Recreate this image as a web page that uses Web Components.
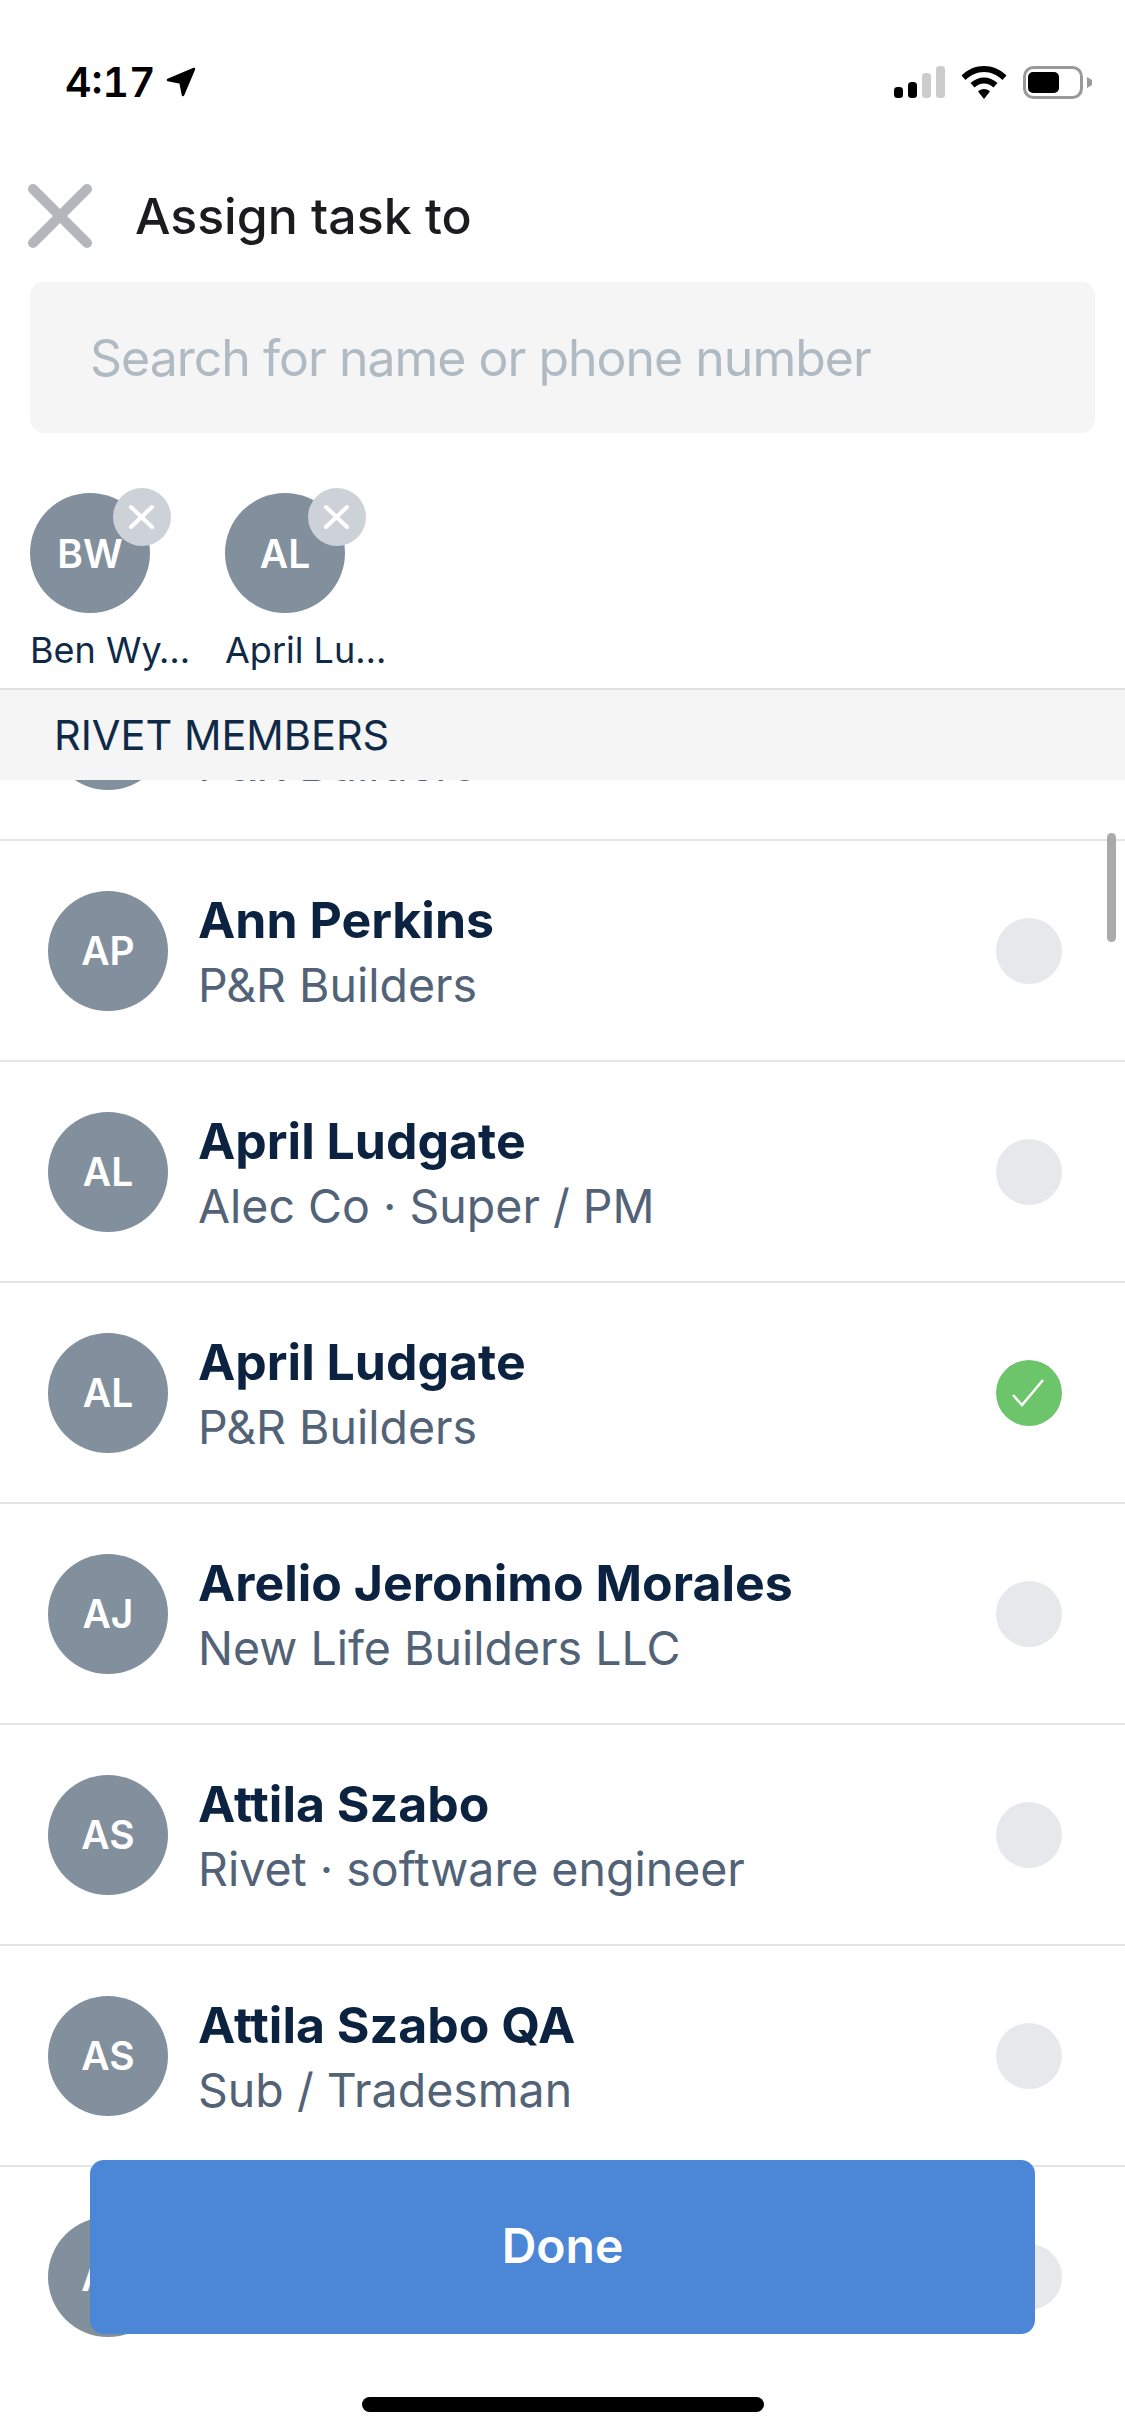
<!doctype html>
<html>
<head>
<meta charset="utf-8">
<title>Assign task to</title>
<style>
  html, body { margin: 0; padding: 0; background: #fff; }
  body { font-family: Inter, "Noto Sans", sans-serif; }
</style>
</head>
<body>

<assign-screen>
  <status-bar slot="top" time="4:17"></status-bar>
  <sheet-header slot="top">Assign task to</sheet-header>
  <search-field slot="top" placeholder="Search for name or phone number"></search-field>
  <chip-strip slot="top">
    <selected-chip initials="BW">Ben Wy…</selected-chip>
    <selected-chip initials="AL">April Lu…</selected-chip>
  </chip-strip>
  <section-label slot="top">RIVET MEMBERS</section-label>

  <member-row>&nbsp;<span slot="sub">P&amp;R Builders</span></member-row>
  <member-row initials="AP">Ann Perkins<span slot="sub">P&amp;R Builders</span></member-row>
  <member-row initials="AL">April Ludgate<span slot="sub">Alec Co · Super / PM</span></member-row>
  <member-row initials="AL" selected>April Ludgate<span slot="sub">P&amp;R Builders</span></member-row>
  <member-row initials="AJ">Arelio Jeronimo Morales<span slot="sub">New Life Builders LLC</span></member-row>
  <member-row initials="AS">Attila Szabo<span slot="sub">Rivet · software engineer</span></member-row>
  <member-row initials="AS">Attila Szabo QA<span slot="sub">Sub / Tradesman</span></member-row>
  <member-row initials="AS">&nbsp;<span slot="sub">&nbsp;</span></member-row>

  <done-button slot="overlay">Done</done-button>
</assign-screen>

<script>
class AssignScreen extends HTMLElement {
  connectedCallback() {
    const shadow = this.shadowRoot || this.attachShadow({ mode: 'open' });
    shadow.innerHTML = `
      <style>
        :host {
          display: flex;
          flex-direction: column;
          position: relative;
          width: 1125px;
          height: 2436px;
          overflow: hidden;
          background: #fff;
        }
        /* stops above the home indicator, the area under the button stays white */
        .list {
          flex: 1 1 0;
          min-height: 0;
          margin-bottom: 90px;
          overflow: hidden;
        }
        /* list is scrolled a bit, first row is cut by the section label */
        .rows { margin-top: -160px; }
        .scrollbar {
          position: absolute;
          left: 1107px;
          top: 833px;
          width: 9px;
          height: 109px;
          border-radius: 5px;
          background: #aaa;
        }
        .home {
          position: absolute;
          left: 362px;
          top: 2397px;
          width: 402px;
          height: 15px;
          border-radius: 8px;
          background: #000;
        }
      </style>
      <slot name="top"></slot>
      <div class="list"><div class="rows"><slot></slot></div></div>
      <div class="scrollbar"></div>
      <slot name="overlay"></slot>
      <div class="home"></div>
    `;
  }
}

class StatusBar extends HTMLElement {
  connectedCallback() {
    const shadow = this.shadowRoot || this.attachShadow({ mode: 'open' });
    shadow.innerHTML = `
      <style>
        :host {
          display: flex;
          align-items: flex-start;
          justify-content: space-between;
          box-sizing: border-box;
          height: 170px;
          padding: 62px 33px 0 65px;
        }
        .left { display: flex; align-items: center; gap: 10px; height: 40px; }
        .time {
          font-size: 41px;
          font-weight: 600;
          font-variant-numeric: tabular-nums;
          color: #000;
          line-height: 40px;
        }
        .right { display: flex; align-items: center; gap: 16px; height: 40px; }
        svg { display: block; }
      </style>
      <div class="left">
        <span class="time">${this.getAttribute('time')}</span>
        <svg width="30" height="30" viewBox="0 0 30 30">
          <path d="M2 13 L28 2 L17 28 L14.5 15.5 Z" fill="#000" stroke="#000" stroke-width="2.5" stroke-linejoin="round"/>
        </svg>
      </div>
      <div class="right">
        <svg width="51" height="32" viewBox="0 0 51 32">
          <rect x="0" y="21" width="9" height="11" rx="3.5" fill="#000"/>
          <rect x="14" y="16" width="9" height="16" rx="3.5" fill="#000"/>
          <rect x="28" y="7" width="9" height="25" rx="3.5" fill="#ccc"/>
          <rect x="42" y="0" width="9" height="32" rx="3.5" fill="#ccc"/>
        </svg>
        <svg width="46" height="33" viewBox="0 0 46 33">
          <path d="M23 0 C31 0 39 3 45.5 9.5 L41.5 14 C36.5 9 30 6 23 6 C16 6 9.5 9 4.5 14 L.5 9.5 C7 3 15 0 23 0Z" fill="#000"/>
          <path d="M23 11.5 C28 11.5 32.5 13.5 36.5 17 L32.5 21.5 C29.5 19 26.5 17.5 23 17.5 C19.5 17.5 16.5 19 13.5 21.5 L9.5 17 C13.5 13.5 18 11.5 23 11.5Z" fill="#000"/>
          <path d="M23 23 C25.5 23 27.5 24 29 25.5 L23 33 L17 25.5 C18.5 24 20.5 23 23 23Z" fill="#000"/>
        </svg>
        <svg width="69" height="33" viewBox="0 0 69 33">
          <rect x="1.5" y="1.5" width="57" height="30" rx="9" fill="none" stroke="#999" stroke-width="3"/>
          <rect x="5" y="6" width="31" height="21" rx="5" fill="#000"/>
          <path d="M64 11 L69 14 V19 L64 22 Z" fill="#999"/>
        </svg>
      </div>
    `;
  }
}

class SheetHeader extends HTMLElement {
  connectedCallback() {
    const shadow = this.shadowRoot || this.attachShadow({ mode: 'open' });
    shadow.innerHTML = `
      <style>
        :host {
          display: flex;
          align-items: center;
          gap: 43px;
          box-sizing: border-box;
          height: 112px;
          padding: 14px 27px 34px 28px;
        }
        svg { display: block; flex: none; }
        .title { font-size: 50px; font-weight: 500; color: #1c1c1e; }
      </style>
      <svg width="64" height="64" viewBox="0 0 64 64">
        <path d="M5 5 L59 59 M59 5 L5 59" fill="none" stroke="#b5b6bb" stroke-width="10" stroke-linecap="round"/>
      </svg>
      <span class="title"><slot></slot></span>
    `;
  }
}

class SearchField extends HTMLElement {
  connectedCallback() {
    const shadow = this.shadowRoot || this.attachShadow({ mode: 'open' });
    shadow.innerHTML = `
      <style>
        :host {
          display: flex;
          align-items: center;
          box-sizing: border-box;
          height: 151px;
          margin: 0 30px;
          padding-left: 60px;
          border-radius: 14px;
          background: #f5f5f6;
        }
        .ph { font-size: 50px; letter-spacing: -1px; color: #b0bac3; white-space: nowrap; }
      </style>
      <span class="ph">${this.getAttribute('placeholder')}</span>
    `;
  }
}

class ChipStrip extends HTMLElement {
  connectedCallback() {
    const shadow = this.shadowRoot || this.attachShadow({ mode: 'open' });
    shadow.innerHTML = `
      <style>
        :host {
          display: flex;
          gap: 30px;
          box-sizing: border-box;
          height: 255px;
          padding: 60px 0 0 30px;
        }
      </style>
      <slot></slot>
    `;
  }
}

class SelectedChip extends HTMLElement {
  connectedCallback() {
    const shadow = this.shadowRoot || this.attachShadow({ mode: 'open' });
    shadow.innerHTML = `
      <style>
        :host {
          display: flex;
          flex-direction: column;
          position: relative;
          width: 165px;
        }
        .avatar {
          display: flex;
          align-items: center;
          justify-content: center;
          width: 120px;
          height: 120px;
          border-radius: 50%;
          background: #828f9d;
          color: #fff;
          font-size: 39px;
          font-weight: 600;
        }
        .remove {
          position: absolute;
          left: 83px;
          top: -5px;
          width: 58px;
          height: 58px;
          border-radius: 50%;
          background: #ccd2d7;
        }
        .remove svg { display: block; }
        .name {
          margin-top: 12px;
          font-size: 36px;
          line-height: 50px;
          color: #0e2a47;
          white-space: nowrap;
        }
      </style>
      <div class="avatar">${this.getAttribute('initials')}</div>
      <div class="remove">
        <svg width="58" height="58" viewBox="0 0 58 58">
          <path d="M18 19 L39 39 M39 19 L18 39" fill="none" stroke="#fff" stroke-width="4" stroke-linecap="round"/>
        </svg>
      </div>
      <div class="name"><slot></slot></div>
    `;
  }
}

class SectionLabel extends HTMLElement {
  connectedCallback() {
    const shadow = this.shadowRoot || this.attachShadow({ mode: 'open' });
    shadow.innerHTML = `
      <style>
        :host {
          display: flex;
          align-items: center;
          position: relative;
          box-sizing: border-box;
          height: 92px;
          padding-left: 54px;
          border-top: 2px solid #dfe1e5;
          background: #f5f5f6;
          font-size: 41.5px;
          color: #0e2a47;
        }
      </style>
      <slot></slot>
    `;
  }
}

class MemberRow extends HTMLElement {
  connectedCallback() {
    const shadow = this.shadowRoot || this.attachShadow({ mode: 'open' });
    const initials = this.getAttribute('initials') || '';
    const check = this.hasAttribute('selected')
      ? `<svg width="66" height="66" viewBox="0 0 66 66"><path d="M17 35 L26 45 L47 20" fill="none" stroke="#fff" stroke-width="2.5"/></svg>`
      : '';
    shadow.innerHTML = `
      <style>
        :host {
          display: flex;
          align-items: center;
          box-sizing: border-box;
          height: 221px;
          padding: 0 63px 0 48px;
          border-bottom: 2px solid #e4e5e9;
        }
        .avatar {
          display: flex;
          align-items: center;
          justify-content: center;
          flex: none;
          width: 120px;
          height: 120px;
          border-radius: 50%;
          background: #828f9d;
          color: #fff;
          font-size: 39px;
          font-weight: 600;
        }
        .text {
          flex: 1 1 0;
          min-width: 0;
          margin-left: 30px;
          padding-top: 3px;
        }
        .name {
          font-size: 50px;
          font-weight: 700;
          line-height: 66px;
          color: #0b2340;
          white-space: nowrap;
        }
        .sub {
          font-size: 46.5px;
          line-height: 65px;
          color: #536377;
          white-space: nowrap;
        }
        .radio {
          flex: none;
          width: 66px;
          height: 66px;
          border-radius: 50%;
          background: #e7e8eb;
        }
        .radio.on { background: #6cc56a; }
        .radio svg { display: block; }
      </style>
      <div class="avatar">${initials}</div>
      <div class="text">
        <div class="name"><slot></slot></div>
        <div class="sub"><slot name="sub"></slot></div>
      </div>
      <div class="radio ${check ? 'on' : ''}">${check}</div>
    `;
  }
}

class DoneButton extends HTMLElement {
  connectedCallback() {
    const shadow = this.shadowRoot || this.attachShadow({ mode: 'open' });
    shadow.innerHTML = `
      <style>
        :host {
          display: flex;
          align-items: center;
          justify-content: center;
          position: absolute;
          left: 90px;
          top: 2160px;
          width: 945px;
          height: 174px;
          border-radius: 14px;
          background: #4c86d7;
          color: #fff;
          font-size: 48px;
          font-weight: 600;
          padding-bottom: 3px;
          box-sizing: border-box;
        }
      </style>
      <slot></slot>
    `;
  }
}

customElements.define('assign-screen', AssignScreen);
customElements.define('status-bar', StatusBar);
customElements.define('sheet-header', SheetHeader);
customElements.define('search-field', SearchField);
customElements.define('chip-strip', ChipStrip);
customElements.define('selected-chip', SelectedChip);
customElements.define('section-label', SectionLabel);
customElements.define('member-row', MemberRow);
customElements.define('done-button', DoneButton);
</script>
</body>
</html>
